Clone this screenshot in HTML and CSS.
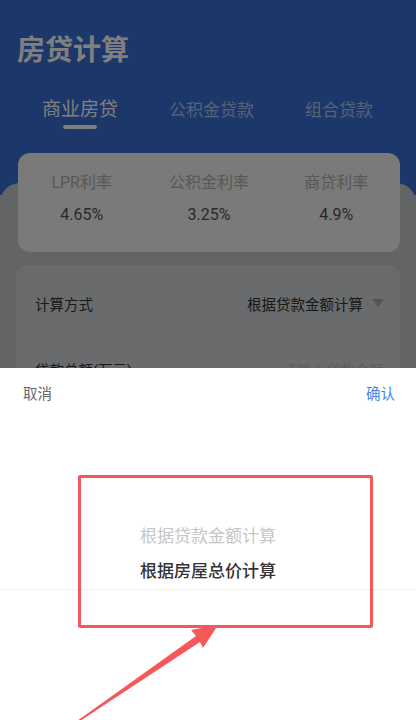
FILE: index.html
```html
<!DOCTYPE html>
<html lang="zh-CN">
  <head>
    <meta charset="utf-8" />
    <title>房贷计算</title>
    <link rel="stylesheet" href="styles.css">
  </head>
  <body>

    <!--Top blue header with title and loan type tabs-->
    <div class="header">
      <h1 class="title">房贷计算</h1>
      <div class="tabs">
        <div class="tab active">商业房贷</div>
        <div class="tab">公积金贷款</div>
        <div class="tab">组合贷款</div>
      </div>
    </div>

    <div class="main">
      <!--Current rates-->
      <div class="rates">
        <div class="rate">
          <div class="rateName">LPR利率</div>
          <div class="rateValue">4.65%</div>
        </div>
        <div class="rate">
          <div class="rateName">公积金利率</div>
          <div class="rateValue">3.25%</div>
        </div>
        <div class="rate">
          <div class="rateName">商贷利率</div>
          <div class="rateValue">4.9%</div>
        </div>
      </div>

      <!--Form rows-->
      <div class="form">
        <div class="row">
          <span class="label">计算方式</span>
          <span class="value">根据贷款金额计算<i class="caret"></i></span>
        </div>
        <div class="row">
          <span class="label">贷款总额(万元)</span>
          <span class="placeholder">请输入贷款金额</span>
        </div>
      </div>
    </div>

    <!--Picker popup-->
    <div class="mask"></div>
    <div class="sheet">
      <div class="sheetBar">
        <span class="cancel">取消</span>
        <span class="confirm">确认</span>
      </div>
      <div class="picker">
        <div class="option">根据贷款金额计算</div>
        <div class="option selected">根据房屋总价计算</div>
      </div>
    </div>

    <!--Red note box and arrow-->
    <div class="noteBox"></div>
    <svg class="noteArrow" width="416" height="720" viewBox="0 0 416 720">
      <path d="M77 721 L196 636 L191 630 L218 625 L203 648 L200 642 L80 721 Z" fill="#f4585b"/>
    </svg>

  </body>
</html>
```

FILE: styles.css
```css
body {margin: 0;
      width: 416px;
      height: 720px;
      overflow: hidden;
      font-family: Roboto, "Noto Sans CJK SC", sans-serif;
      background-color: #c4c8cc;}

.header {background-color: #386ed2;
         padding: 31px 0 66px;}

.title {margin: 0;
        padding-left: 17px;
        font-size: 28px;
        line-height: 40px;
        font-weight: bold;
        color: white;}

.tabs {display: flex;
       gap: 51px;
       padding-left: 42px;
       margin-top: 25px;}

.tab {display: flex;
      flex-direction: column;
      align-items: center;
      font-size: 17px;
      line-height: 28px;
      color: rgba(255, 255, 255, 0.6);}

.tab.active {font-size: 19px;
             color: white;}

.tab.active::after {content: "";
                    width: 34px;
                    height: 4px;
                    margin-top: 1px;
                    border-radius: 2px;
                    background-color: white;}

.main {display: flex;
       flex-direction: column;
       margin-top: -12px;
       border-radius: 20px 20px 0 0;
       background-color: #c4c8cc;
       height: 537px;}

.rates {display: grid;
        grid-template-columns: 1fr 1fr 1fr;
        margin: -30px 16px 0 18px;
        padding: 18px 0 25px;
        border-radius: 12px;
        background-color: #f4f4f4;
        text-align: center;}

.rateName {font-size: 16px;
           line-height: 24px;
           color: #b0b0b0;}

.rateValue {margin-top: 8px;
            font-size: 16px;
            line-height: 24px;
            color: #555;}

.form {margin: 13px 16px 0 16px;
       padding-top: 5px;
       border-radius: 12px;
       background-color: #d4d6da;}

.row {display: flex;
      justify-content: space-between;
      align-items: center;
      height: 66px;
      padding: 0 16px 0 19px;
      font-size: 14.5px;
      color: #333;}

.value {display: flex;
        align-items: center;}

.caret {width: 0;
        height: 0;
        margin-left: 9px;
        border-left: 6px solid transparent;
        border-right: 6px solid transparent;
        border-top: 8px solid #aaa;}

.placeholder {color: #bbb;}

.mask {position: fixed;
       inset: 0;
       background-color: rgba(0, 0, 0, 0.5);}

.sheet {position: fixed;
        left: 0;
        right: 0;
        top: 368px;
        bottom: 0;
        background-color: white;}

.sheetBar {display: flex;
           justify-content: space-between;
           align-items: center;
           height: 48px;
           padding: 0 21px 0 23px;
           font-size: 14.5px;}

.cancel {color: #666;}
.confirm {color: #3d86f0;}

.picker {padding-top: 103px;
         text-align: center;}

.option {font-size: 17px;
         line-height: 35px;
         color: #c6c6c6;}

.option.selected {color: #333;
                  font-weight: 500;
                  border-bottom: 1px solid #f0f0f0;}

.noteBox {position: fixed;
          left: 78px;
          top: 475px;
          width: 289px;
          height: 147px;
          border: 3px solid #f4585b;
          border-radius: 2px;}

.noteArrow {position: fixed;
            left: 0;
            top: 0;}
```
